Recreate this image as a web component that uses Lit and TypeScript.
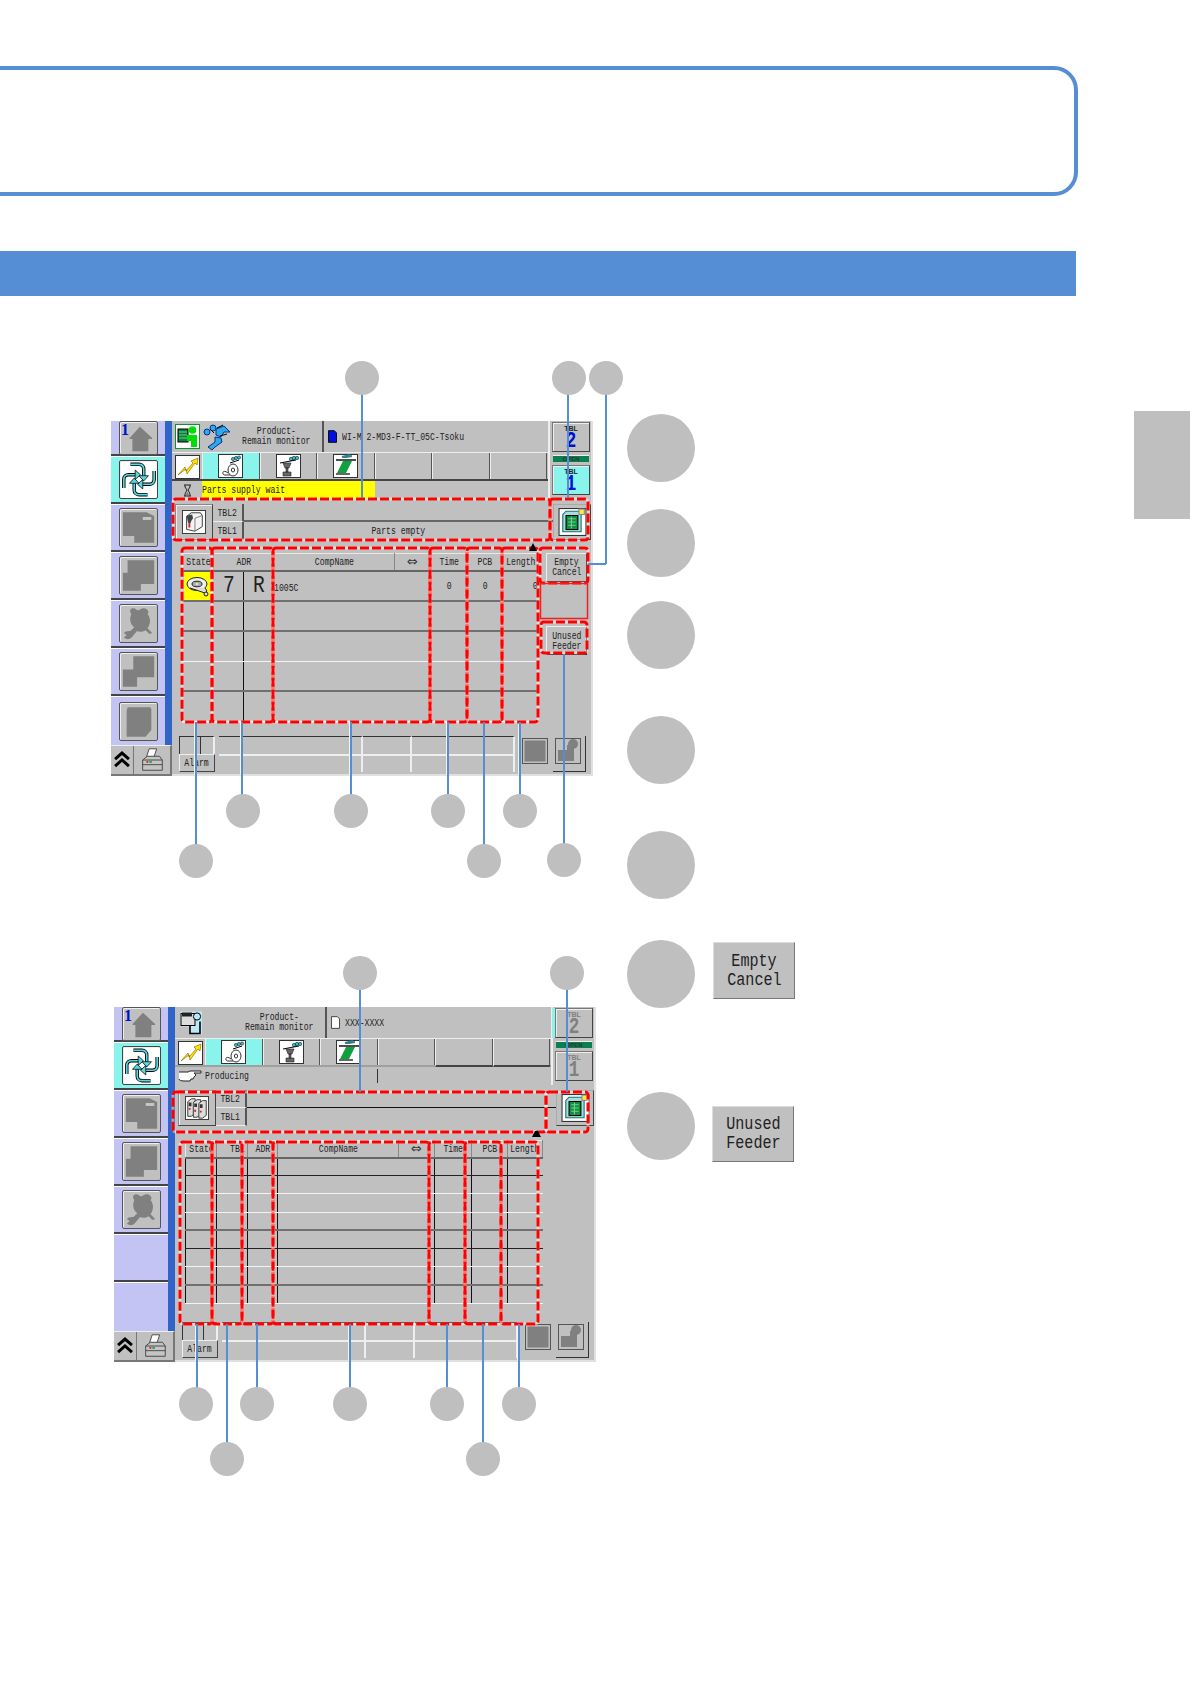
import { LitElement, html, css, svg } from "lit";
import { customElement, property } from "lit/decorators.js";

const gray = "#808080";
const arm = "M11 3 H20 C23 3 25 5 25 8 V15";
const head = "M20 15 H30 L25 20.5Z";
const arrowBlades = [0, 90, 180, 270].map((r) => svg`<g transform="rotate(${r} 20 19)"><path d=${arm} fill="none" stroke="#000" stroke-width="3.6"/><path d=${arm} fill="none" stroke="#58d8e0" stroke-width="1.8"/><path d=${head} fill="#58d8e0" stroke="#000" stroke-width=".8"/></g>`);

const icons = {
  home: html`<svg viewBox="0 0 39 34" class="ic"><text x="1" y="14" font-family="Liberation Serif" font-weight="700" font-size="17" fill="#0010d0">1</text><path fill="${gray}" d="M10 17 L21 5 L34 17 V18 H30 V31 H13 V18 H10Z"/></svg>`,
  cycle: html`<svg viewBox="0 0 39 38" class="ic">${arrowBlades}</svg>`,
  blob: html`<svg viewBox="0 0 39 38" class="ic"><path fill="${gray}" d="M3 3 H28 L36 7 V35 H15 V28 H3Z"/><rect x="24" y="8" width="9" height="3" fill="#c8c8c8"/></svg>`,
  stairs: html`<svg viewBox="0 0 39 38" class="ic"><path fill="${gray}" d="M8 3 H36 V28 H22 V35 H3 V16 H8Z"/></svg>`,
  bear: html`<svg viewBox="0 0 39 38" class="ic"><path fill="${gray}" d="M13 3 C16 2 17 5 19 5 C21 5 23 2 26 3 C30 4 31 8 29 9 C33 14 32 20 29 24 L34 29 L31 30 L27 26 C24 28 20 28 18 27 L12 34 C10 36 7 36 4 34 L7 31 L4 29 C6 27 9 27 11 27 L15 23 C10 19 10 13 12 9 C10 7 10 4 13 3Z"/></svg>`,
  stairs2: html`<svg viewBox="0 0 39 38" class="ic"><path fill="${gray}" d="M14 3 H36 V25 H18 V35 H3 V17 H14Z"/></svg>`,
  page: html`<svg viewBox="0 0 39 38" class="ic"><path fill="${gray}" d="M8 4 H32 L33 6 V28 L27 35 H7 V8Z"/></svg>`,
  chev: html`<svg viewBox="0 0 22 30" class="ic"><path d="M3 14 L11 7 L19 14 M3 22 L11 15 L19 22" fill="none" stroke="#000" stroke-width="3.4"/></svg>`,
  printer: html`<svg viewBox="0 0 36 30" class="ic"><path d="M15 3 H23 L20 12 H12Z" fill="#fff" stroke="#444"/><path d="M8 15 L13 11 H26 L29 15 V26 H8Z" fill="#c4c4c4" stroke="#444"/><path d="M8 20 H29 M8 15 H29" stroke="#444"/><path d="M12 17 H14" stroke="#e02020" stroke-width="2"/><path d="M15 17 H18" stroke="#20b040" stroke-width="2"/></svg>`,
  person: html`<svg viewBox="0 0 25 25" class="ic"><rect x=".5" y=".5" width="24" height="24" fill="#fff" stroke="#109030"/><rect x="3" y="5" width="10" height="13" fill="#108040" stroke="#000"/><path d="M4 8h8M4 11h8M4 14h8" stroke="#60d080"/><circle cx="17.5" cy="6" r="3.8" fill="#00e000"/><path d="M12 11 H22 V23 H16 V17 H12Z" fill="#00e000"/></svg>`,
  runner: html`<svg viewBox="0 0 28 28" class="ic"><g stroke="#003090" fill="#30a8e8"><circle cx="10" cy="5" r="3"/><circle cx="4" cy="9" r="3"/><path d="M13 6 L21 3 L27 9 L21 9 L18 14 L13 12Z"/><path d="M12 14 L18 15 L19 19 L12 24 L9 27 L5 24 L12 19Z"/></g><path d="M14 5 L20 2 M17 13 L24 11 M7 6 L11 10" stroke="#000"/></svg>`,
  bluefile: html`<svg viewBox="0 0 10 14" class="fi"><path d="M.5 .5 H7 L9.5 3 V13.5 H.5Z" fill="#0010d8" stroke="#000"/></svg>`,
  whitefile: html`<svg viewBox="0 0 10 14" class="fi"><path d="M.5 .5 H7 L9.5 3 V13.5 H.5Z" fill="#fff" stroke="#333"/></svg>`,
  bolt: html`<svg viewBox="0 0 25 24" class="ic"><rect x=".5" y=".5" width="24" height="23" fill="#fff" stroke="#333"/><path d="M3 20 L10 12 L11 16 L18 8 L16 6 L23 3 L22 10 L20 8 L12 19 L11 14Z" fill="#ffe000" stroke="#806000" stroke-width=".6"/></svg>`,
  reel: html`<svg viewBox="0 0 25 24" class="ic"><rect x=".5" y=".5" width="24" height="23" fill="#fff" stroke="#333"/><circle cx="15" cy="5" r="1.6" fill="#30c0d0" stroke="#000" stroke-width=".5"/><circle cx="18" cy="4" r="1.6" fill="#30c0d0" stroke="#000" stroke-width=".5"/><circle cx="21" cy="3.5" r="1.6" fill="#30c0d0" stroke="#000" stroke-width=".5"/><path d="M12 9 L21 6" stroke="#000"/><ellipse cx="15" cy="16" rx="5" ry="6" fill="#fff" stroke="#333"/><ellipse cx="15" cy="16" rx="1.6" ry="2" fill="none" stroke="#333"/><path d="M10 19 C4 14 3 22 8 21 L12 21" fill="none" stroke="#333"/></svg>`,
  nozzle: html`<svg viewBox="0 0 25 24" class="ic"><rect x=".5" y=".5" width="24" height="23" fill="#fff" stroke="#333"/><circle cx="15" cy="5" r="1.7" fill="#30c0d0" stroke="#000" stroke-width=".5"/><circle cx="18" cy="4" r="1.7" fill="#30c0d0" stroke="#000" stroke-width=".5"/><circle cx="21" cy="4" r="1.7" fill="#30c0d0" stroke="#000" stroke-width=".5"/><path d="M4 9 L20 6" stroke="#000"/><path d="M7 9 H15 L13 14 H9Z M10 14 H12 V18 H10Z M7 18 H15 V22 H7Z" fill="#666" stroke="#222" stroke-width=".6"/></svg>`,
  green: html`<svg viewBox="0 0 25 24" class="ic"><rect x=".5" y=".5" width="24" height="23" fill="#fff" stroke="#333"/><path d="M9 3 L17 1 M13 3 L19 2" stroke="#308090" stroke-width="2"/><path d="M3 6 H23" stroke="#000" stroke-width="1.4"/><path d="M10 7 H19 L13 19 H4Z" fill="#10a040"/><path d="M3 20 H17" stroke="#666" stroke-width="2"/></svg>`,
  hour: html`<svg viewBox="0 0 9 13" class="hg"><path d="M1 1 H8 M1 12 H8 M2 1 V3 L4 6 L2 10 V12 M7 1 V3 L5 6 L7 10 V12" fill="none" stroke="#222"/><path d="M3 11 H6 L4.5 8Z" fill="#777"/></svg>`,
  hand: html`<svg viewBox="0 0 24 12" class="hand"><path d="M1 2 H10 L12 1 H23 V3 H16 L18 5 L16 7 L15 9 H13 L12 11 H6 C3 11 1 10 1 9" fill="#fff" stroke="#222"/></svg>`,
  feeder: html`<svg viewBox="0 0 26 26" class="ic"><rect x=".5" y=".5" width="25" height="25" fill="#fff" stroke="#333"/><path d="M5 7 L10 3 H20 L22 6 V18 L14 23 L5 21Z" fill="#f4f4f4" stroke="#333"/><path d="M14 9 L22 6 M14 9 V23" fill="none" stroke="#777"/><path d="M5 6 L11 5 L12 9 L10 12 L9 15 L7 15 L6 11Z" fill="#444"/><path d="M8 15 V19" stroke="#d02020" stroke-width="2"/></svg>`,
  feeders: html`<svg viewBox="0 0 26 26" class="ic"><rect x=".5" y=".5" width="25" height="25" fill="#fff" stroke="#333"/><g fill="#ddd" stroke="#333"><path d="M3 6 L7 3 H11 V18 L7 22 H3Z"/><path d="M9 7 L13 4 H17 V20 L13 23 H9Z"/><path d="M15 8 L19 5 H23 V21 L19 24 H15Z"/></g><path d="M4 7 H7 V11 H4Z M10 8 H13 V12 H10Z M16 9 H19 V13 H16Z" fill="#333"/><path d="M5 13 V15 M11 15 V17 M17 16 V18" stroke="#d02020" stroke-width="2"/></svg>`,
  pcb: html`<svg viewBox="0 0 26 26" class="ic"><rect x=".5" y=".5" width="25" height="25" fill="#fff" stroke="#333"/><path d="M7 3 H21 V22 H4 V6Z" fill="#a8dce0" stroke="#107070"/><rect x="7" y="7" width="11" height="13" fill="#109040" stroke="#000"/><path d="M9 10h7M9 13h7M9 16h7M12 8v11" stroke="#70d090"/><rect x="19" y="1" width="5" height="5" fill="#ffe840" stroke="#888"/></svg>`,
  tape: html`<svg viewBox="0 0 26 24" class="tp"><ellipse cx="12" cy="10" rx="10" ry="6.5" fill="#eee" stroke="#222"/><ellipse cx="12" cy="10" rx="5" ry="2.8" fill="#aaa" stroke="#222"/><ellipse cx="12" cy="10" rx="1.4" ry=".8" fill="#fff"/><path d="M5 14 L20 19 L22 17 L20 14" fill="#ddd" stroke="#222"/><circle cx="21" cy="20" r="2" fill="#ddd" stroke="#222"/></svg>`,
  docIcon: html`<svg viewBox="0 0 25 24" class="ic"><path d="M2 1 H24 V14 L24 24 H12 V16 H2Z" fill="#bde8f8"/><rect x="3" y="3" width="14" height="12" fill="#ddd" stroke="#000"/><rect x="4" y="2" width="10" height="4" fill="#222"/><circle cx="19" cy="6" r="3.6" fill="#bde8f8" stroke="#000"/><path d="M12 15 V23 H22 V11" fill="none" stroke="#000" stroke-width="1.6"/></svg>`,
  sq: html`<svg viewBox="0 0 26 26" class="ic"><rect x=".5" y=".5" width="25" height="25" fill="none" stroke="#555"/><rect x="2.5" y="2.5" width="21" height="21" fill="${gray}"/></svg>`,
  lockish: html`<svg viewBox="0 0 26 26" class="ic"><rect x=".5" y=".5" width="25" height="25" fill="none" stroke="#555"/><path d="M3 12 H12 V7 H16 V23 H3Z" fill="${gray}"/><circle cx="18" cy="6" r="5" fill="${gray}"/><rect x="12" y="8" width="7" height="15" fill="${gray}"/></svg>`,
};

@customElement("ui-screen")
class UiScreen extends LitElement {
  @property() variant: "a" | "b" = "a";

  static styles = css`
    :host { display: grid; width: 482px; height: 355px; grid-template-columns: 61px 421px; grid-template-rows: 324px 31px; background: #c0c0c0; }
    * { box-sizing: border-box; }
    .ic { display: block; width: 100%; height: 100%; }
    .fi { width: 9px; height: 13px; flex: none; }
    .hg { width: 9px; height: 13px; }
    .hand { width: 24px; height: 12px; }
    .tp { width: 26px; height: 24px; }
    .t { font-family: "Liberation Mono", monospace; font-size: 11px; line-height: 10px; color: #222; white-space: pre; display: inline-block; transform: scaleX(.74); }
    .t.l { transform-origin: left; }
    .c { display: flex; justify-content: center; width: 100%; }
    .arrows { font-family: "DejaVu Sans", sans-serif; font-size: 13px; line-height: 10px; color: #333; }
    .side { display: flex; flex-direction: column; border-right: 7px solid #3064c8; background: #c4c4f4; }
    .sb { height: 48px; flex: none; display: flex; align-items: center; justify-content: center; border-bottom: 2px solid #444; border-top: 1px solid #fff; }
    .sb.first { height: 35px; border-top: none; }
    .sb.on { background: #88f4ec; }
    .sb.first .key { height: 34px; }
    .sb:last-child { flex: 1 1 0; height: auto; border-bottom: none; }
    .key { width: 39px; height: 39px; background: #c0c0c0; border: 1px solid #555; border-radius: 2px; box-shadow: inset 1px 1px 0 #eee; }
    .on .key { background: #fff; border-color: #444; }
    .corner { grid-column: 1; grid-row: 2; display: flex; border-top: 1px solid #eee; border-bottom: 2px solid #777; border-right: 2px solid #777; }
    .corner .c1 { width: 23px; padding: 1px 0; border-right: 1px solid #777; }
    .corner .c2 { width: 36px; }
    .main { grid-column: 2; grid-row: 1 / span 2; display: flex; flex-direction: column; border-right: 2px solid #e0e0e0; border-bottom: 2px solid #e0e0e0; min-height: 0; }
    .upper { display: grid; grid-template-columns: 376px 43px; height: 78px; flex: none; }
    .hd { display: flex; height: 31px; align-items: stretch; }
    .hd .i1 { width: 25px; height: 25px; margin: 3px 3px 0 3px; flex: none; }
    .hd .i2 { width: 28px; height: 28px; margin-top: 2px; flex: none; }
    .title { width: 93px; text-align: center; border-right: 2px solid #555; line-height: 10px; padding-top: 5px; flex: none; }
    .title .c { height: 10px; }
    .file { flex: 1; display: flex; align-items: center; gap: 5px; padding-left: 4px; }
    .tools { display: flex; height: 29px; border-top: 1px solid #eee; }
    .tools .i0 { width: 25px; height: 24px; margin: 2px 2px 0 3px; flex: none; }
    .a .tools { border-bottom: 2px solid #444; }
    .b .tools { border-bottom: 2px solid #a0a0a0; }
    .b .tb.end { border-bottom: 2px solid #444; margin-bottom: -2px; }
    .tb { width: 57.5px; flex: none; border-right: 1px solid #555; border-left: 1px solid #eee; display: flex; align-items: center; justify-content: center; }
    .tb .ib { width: 25px; height: 24px; }
    .tb.on { background: #88f4ec; }
    .msg { height: 18px; display: flex; align-items: center; }
    .msg .ico { width: 30px; display: flex; justify-content: center; flex: none; }
    .msg .txt { width: 173px; height: 100%; flex: none; display: flex; align-items: center; }
    .a .msg .txt { background: #ff0; }
    .b .msg .txt { border-right: 1px solid #333; width: 173px; height: 14px; }
    .tabs { display: flex; flex-direction: column; align-items: center; padding: 1px 2px 0 3px; border-left: 2px solid #eee; }
    .tab { width: 38px; height: 30px; background: #c0c0c0; border: 1px solid #777; border-right-color: #444; border-bottom-color: #444; box-shadow: inset 1px 1px 0 #eee; text-align: center; font-family: "Liberation Sans", sans-serif; flex: none; }
    .tab.on { background: #88f4ec; }
    .tab b { display: block; font-size: 7px; line-height: 7px; padding-top: 2px; color: #222; }
    .tab i { display: block; font: 700 22px/19px "Liberation Mono", monospace; color: #0010d0; transform: scaleX(.8); }
    .off b, .off i { color: #808080; }
    .off.top { box-shadow: inset 1px 1px 0 #eee, -3px 0 0 #88f4ec; }
    .open { width: 36px; margin: 3px 0; height: 7px; background: #0a8050; font: 700 6px/7px "Liberation Sans", sans-serif; color: #333; text-align: center; border-top: 1px solid #eee; flex: none; }
    .panel { display: grid; grid-template-columns: 38px 31px 1fr 42px; grid-template-rows: 18px 18px; margin: 5px 0 0 3px; height: 36px; flex: none; }
    .panel .pi { grid-row: 1 / span 2; padding: 5px; background: #c0c0c0; border: 1px solid #888; border-right-color: #444; border-bottom-color: #444; box-shadow: inset 1px 1px 0 #eee; }
    .panel .pl { border-right: 2px solid #555; border-bottom: 1px solid #eee; display: flex; align-items: center; }
    .panel .pv { border-bottom: 2px solid #666; display: flex; align-items: center; margin-right: -4px; }
    .b .panel .pv { border-bottom: 1px solid #111; margin-right: -8px; }
    .panel .pv.last { border-bottom: none; }
    .panel .pb { grid-row: 1 / span 2; grid-column: 4; padding: 3px 3px 3px 4px; background: #c0c0c0; border: 1px solid #aaa; border-right-color: #444; border-bottom-color: #444; margin-left: 4px; }
    .body { flex: 1; display: flex; min-height: 0; }
    table { border-collapse: collapse; table-layout: fixed; height: 0; }
    .a table { width: 356px; margin: 13px 0 0 10px; }
    .b table { width: 357px; margin: 14px 0 0 10px; }
    th, td { padding: 0; text-align: center; white-space: nowrap; }
    th { height: 17px; font-weight: normal; border-right: 1px solid #888; border-left: 1px solid #e8e8e8; border-top: 1px solid #e8e8e8; border-bottom: 2px solid #666; }
    td { border-left: 1px solid #b0b0b0; }
    td.sep, .dk td { border-left-color: #111; }
    tr.lb td { border-bottom: 1px solid #222; }
    tr.lw td { border-bottom: 1px solid #f4f4f4; }
    tr.lg td { border-bottom: 2px solid #707070; }
    .a tbody tr { height: 30.2px; }
    .b tbody tr { height: 18.2px; }
    .ycell { width: 28px; height: 28px; background: #ff0; display: flex; align-items: center; justify-content: center; margin: 0 auto; }
    .bg { font: 23px/26px "Liberation Mono", monospace; color: #222; display: inline-block; transform: scaleX(.85); }
    td.nm { text-align: left; }
    td.rt .c { justify-content: flex-end; }
    .side-btns { display: flex; flex-direction: column; align-items: flex-end; width: 50px; flex: none; padding: 13px 2px 0 0; }
    .bt { width: 41px; height: 29px; background: #c0c0c0; line-height: 11px; padding-top: 3px; border: 1px solid #eee; border-right-color: #222; border-bottom-color: #222; }
    .bt + .bt { margin-top: 44px; padding-top: 4px; }
    .status { height: 36px; flex: none; margin: 0 0 2px 7px; display: grid; grid-template-columns: 36px 4px 144px 49px 103px 3px 35px 33px; grid-template-rows: 18px 18px; }
    .status > div { border-top: 1px solid #333; border-right: 2px solid #eee; }
    .status .row2 { border-top: 2px solid #eee; grid-row: 2; }
    .status .k0 { border-left: 1px solid #333; display: flex; }
    .k0 span { width: 21px; border-right: 1px solid #333; }
    .status .k { border: 1px solid #444; border-top-color: #eee; border-left-color: #eee; display: flex; align-items: center; grid-row: 2; grid-column: 1; }
    .status .gap { border: none; }
    .status .sq { grid-row: 1 / span 2; border: none; padding: 1px 5px 7px 4px; }
    .status .s1 { grid-column: 7; }
    .status .s2 { grid-column: 8; padding: 1px 4px 6px 2px; border-right: 1px solid #333; border-bottom: 1px solid #333; }
    .status .g2 { grid-column: 2; grid-row: 2; }
    .status .c3 { grid-column: 3; }
    .status .c4 { grid-column: 4; }
    .status .c5 { grid-column: 5; }
  `;

  private t(s: string) { return html`<div class="c"><span class="t">${s}</span></div>`; }
  private tl(s: string) { return html`<span class="t l">${s}</span>`; }

  private sidebar(b: boolean) {
    const names = b
      ? [icons.home, icons.cycle, icons.blob, icons.stairs, icons.bear, null, null]
      : [icons.home, icons.cycle, icons.blob, icons.stairs, icons.bear, icons.stairs2, icons.page];
    return html`<div class="side">${names.map((n, i) => html`<div class="sb ${i === 0 ? "first" : ""} ${i === 1 ? "on" : ""}">${n ? html`<div class="key">${n}</div>` : ""}</div>`)}</div>
    <div class="corner"><div class="c1">${icons.chev}</div><div class="c2">${icons.printer}</div></div>`;
  }

  private table(b: boolean) {
    const cols = b ? [31, 31, 30, 121, 36, 37, 36, 35] : [31, 30, 30, 121, 36, 37, 35, 36];
    const arrows = html`<div class="c"><span class="arrows">⇔</span></div>`;
    const heads = b
      ? html`<tr><th>${this.t("State")}</th><th>${this.t("  TBL")}</th><th>${this.t("ADR")}</th><th>${this.t("CompName")}</th><th>${arrows}</th><th>${this.t("Time")}</th><th>${this.t("PCB")}</th><th>${this.t("Length")}</th></tr>`
      : html`<tr><th>${this.t("State")}</th><th colspan="2">${this.t("ADR")}</th><th>${this.t("CompName")}</th><th>${arrows}</th><th>${this.t("Time")}</th><th>${this.t("PCB")}</th><th>${this.t("Length")}</th></tr>`;
    const rowsB = ["lb", "lw", "lw", "lg", "lb", "lw", "lg", "lw"];
    const rowsA = ["lg", "lg", "lw", "lg", "lw"];
    const rowTpl = (cls: string, i: number) => {
      if (b) return html`<tr class="${cls} dk"><td></td><td></td><td></td><td colspan="2"></td><td></td><td></td><td></td></tr>`;
      return html`<tr class="${cls}">
        <td>${i === 0 ? html`<div class="ycell">${icons.tape}</div>` : ""}</td>
        <td>${i === 0 ? html`<span class="bg">7</span>` : ""}</td>
        <td class="sep">${i === 0 ? html`<span class="bg">R</span>` : ""}</td>
        <td colspan="2" class="nm">${i === 0 ? this.tl("1005C") : ""}</td>
        <td>${i === 0 ? this.t("0") : ""}</td><td>${i === 0 ? this.t("0") : ""}</td><td class="rt">${i === 0 ? this.t("0") : ""}</td></tr>`;
    };
    return html`<table>
      <colgroup>${cols.map((c) => html`<col style="width:${c}px" />`)}</colgroup>
      <thead>${heads}</thead>
      <tbody>${(b ? rowsB : rowsA).map(rowTpl)}</tbody>
    </table>`;
  }

  render() {
    const b = this.variant === "b";
    return html`
      ${this.sidebar(b)}
      <div class="main ${this.variant}">
        <div class="upper">
          <div>
            <div class="hd">
              <div class="i1">${b ? icons.docIcon : icons.person}</div>
              <div class="i2">${b ? "" : icons.runner}</div>
              <div class="title">${this.t("Product-")}${this.t("Remain monitor")}</div>
              <div class="file">${b ? icons.whitefile : icons.bluefile}${this.tl(b ? "XXX-XXXX" : "WI-M 2-MD3-F-TT_05C-Tsoku")}</div>
            </div>
            <div class="tools">
              <div class="i0">${icons.bolt}</div>
              <div class="tb on"><div class="ib">${icons.reel}</div></div>
              <div class="tb"><div class="ib">${icons.nozzle}</div></div>
              <div class="tb"><div class="ib">${icons.green}</div></div>
              <div class="tb"></div><div class="tb end"></div><div class="tb end"></div>
            </div>
            <div class="msg">
              <div class="ico">${b ? icons.hand : icons.hour}</div>
              <div class="txt">${this.tl(b ? "Producing" : "Parts supply wait")}</div>
            </div>
          </div>
          <div class="tabs">
            <div class="tab ${b ? "off top" : ""}"><b>TBL</b><i>2</i></div>
            <div class="open">OPEN</div>
            <div class="tab ${b ? "off" : "on"}"><b>TBL</b><i>1</i></div>
          </div>
        </div>
        <div class="panel">
          <div class="pi">${b ? icons.feeders : icons.feeder}</div>
          <div class="pl">${this.t("TBL2")}</div><div class="pv"></div>
          <div class="pb">${icons.pcb}</div>
          <div class="pl">${this.t("TBL1")}</div><div class="pv last">${b ? "" : this.t("Parts empty")}</div>
        </div>
        <div class="body">
          ${this.table(b)}
          ${b
            ? ""
            : html`<div class="side-btns">
                <div class="bt">${this.t("Empty")}${this.t("Cancel")}</div>
                <div class="bt">${this.t("Unused")}${this.t("Feeder")}</div>
              </div>`}
        </div>
        <div class="status">
          <div class="k0"><span></span></div><div class="gap"></div><div class="c3"></div><div class="c4"></div><div class="c5"></div>
          <div class="sq s1">${icons.sq}</div><div class="sq s2">${icons.lockish}</div>
          <div class="k">${this.t("Alarm")}</div><div class="gap g2"></div><div class="row2 c3"></div><div class="row2 c4"></div><div class="row2 c5"></div>
        </div>
      </div>`;
  }
}

const BLUE = "#568ed6";
const C = "#bfbfbf";

const dashed: number[][] = [
  [173, 499, 550, 540], [550, 499, 588, 540], [182, 548, 212, 722], [212, 548, 273, 722], [273, 548, 430, 722], [430, 548, 467, 722], [467, 548, 502, 722], [502, 548, 538, 722], [540, 548, 588, 583], [541, 622, 587, 653],
  [173, 1092, 546, 1132], [546, 1092, 588, 1132], [180, 1142, 212, 1324], [212, 1142, 242, 1324], [242, 1142, 273, 1324], [273, 1142, 429, 1324], [429, 1142, 465, 1324], [465, 1142, 501, 1324], [501, 1142, 538, 1324],
];
const lines: number[][] = [
  [362, 378, 362, 498], [568, 378, 568, 498], [606, 378, 606, 564], [606, 564, 588, 564],
  [196, 722, 196, 845], [242, 722, 242, 795], [351, 722, 351, 795], [448, 722, 448, 795], [484, 722, 484, 845], [520, 722, 520, 795], [564, 654, 564, 845],
  [360, 973, 360, 1092], [567, 973, 567, 1092], [197, 1324, 197, 1390], [227, 1324, 227, 1445], [257, 1324, 257, 1390], [350, 1324, 350, 1390], [447, 1324, 447, 1390], [483, 1324, 483, 1445], [519, 1324, 519, 1390],
];
const halos: number[][] = [[194.5, 722, 775], [240.5, 722, 775], [349.5, 722, 775], [446.5, 722, 775], [518.5, 722, 775], [195.5, 1324, 1361], [348.5, 1324, 1361], [517.5, 1324, 1361]];
const dots: number[][] = [
  [362, 378], [569, 378], [606, 378], [243, 811], [351, 811], [448, 811], [520, 811], [196, 861], [484, 861], [564, 860],
  [360, 973], [567, 973], [196, 1404], [257, 1404], [350, 1404], [447, 1404], [519, 1404], [227, 1459], [483, 1459],
];
const bigDots = [448, 543, 635, 750, 865, 974, 1126];

@customElement("app-root")
class AppRoot extends LitElement {
  static styles = css`
    :host { display: block; width: 1190px; height: 1684px; overflow: hidden; background: #fff; position: relative; }
    * { box-sizing: border-box; }
    .note { width: 1118px; height: 130px; margin: 66px 0 0 -40px; border: 4px solid #568ed6; border-radius: 24px; }
    .bar { width: 1076px; height: 45px; margin-top: 55px; background: #568ed6; }
    .thumb { position: absolute; left: 1134px; top: 411px; width: 56px; height: 108px; background: #bfbfbf; }
    .canvas { position: relative; height: 1388px; }
    ui-screen { position: absolute; }
    .s1 { left: 111px; top: 125px; }
    .s2 { left: 114px; top: 711px; }
    .over { position: absolute; left: 0; top: 0; width: 1190px; height: 1388px; pointer-events: none; }
    .legend { position: absolute; background: #c0c0c0; border: 1px solid #777; border-left-color: #ddd; border-top-color: #ddd; font: 18px/19px "Liberation Mono", monospace; color: #222; display: flex; flex-direction: column; justify-content: center; align-items: center; }
    .legend span { display: block; transform: scaleX(.84); white-space: pre; }
    .l1 { left: 713px; top: 646px; width: 82px; height: 57px; }
    .l2 { left: 712px; top: 810px; width: 82px; height: 56px; }
  `;

  render() {
    return html`
      <div class="note"></div>
      <div class="bar"></div>
      <div class="thumb"></div>
      <div class="canvas">
        <ui-screen class="s1" variant="a"></ui-screen>
        <ui-screen class="s2" variant="b"></ui-screen>
        <div class="legend l1"><span>Empty</span><span>Cancel</span></div>
        <div class="legend l2"><span>Unused</span><span>Feeder</span></div>
        <svg class="over" viewBox="0 296 1190 1388">
          ${halos.map(([x, y, y2]) => svg`<line x1=${x} y1=${y} x2=${x} y2=${y2} stroke="#f4f4f4" stroke-width="1"/>`)}
          ${dashed.map(([x, y, x2, y2]) => svg`<rect x=${x} y=${y} width=${x2 - x} height=${y2 - y} rx="3" fill="none" stroke="rgba(255,255,255,.45)" stroke-width="3"/><rect x=${x} y=${y} width=${x2 - x} height=${y2 - y} rx="3" fill="none" stroke="#f00" stroke-width="3" stroke-dasharray="9 3"/>`)}
          <rect x="540.5" y="583.5" width="47" height="35" fill="none" stroke="#f02020" stroke-width="1.5"/>
          <path d="M529 551 L533 543 L537 551Z M532 1137 H541 L538 1131 H535Z" fill="#000"/>
          ${lines.map(([x, y, x2, y2]) => svg`<line x1=${x} y1=${y} x2=${x2} y2=${y2} stroke=${BLUE} stroke-width="2"/>`)}
          ${dots.map(([x, y]) => svg`<circle cx=${x} cy=${y} r="17" fill=${C}/>`)}
          ${bigDots.map((y) => svg`<circle cx="661" cy=${y} r="34" fill=${C}/>`)}
        </svg>
      </div>`;
  }
}
void UiScreen; void AppRoot;
